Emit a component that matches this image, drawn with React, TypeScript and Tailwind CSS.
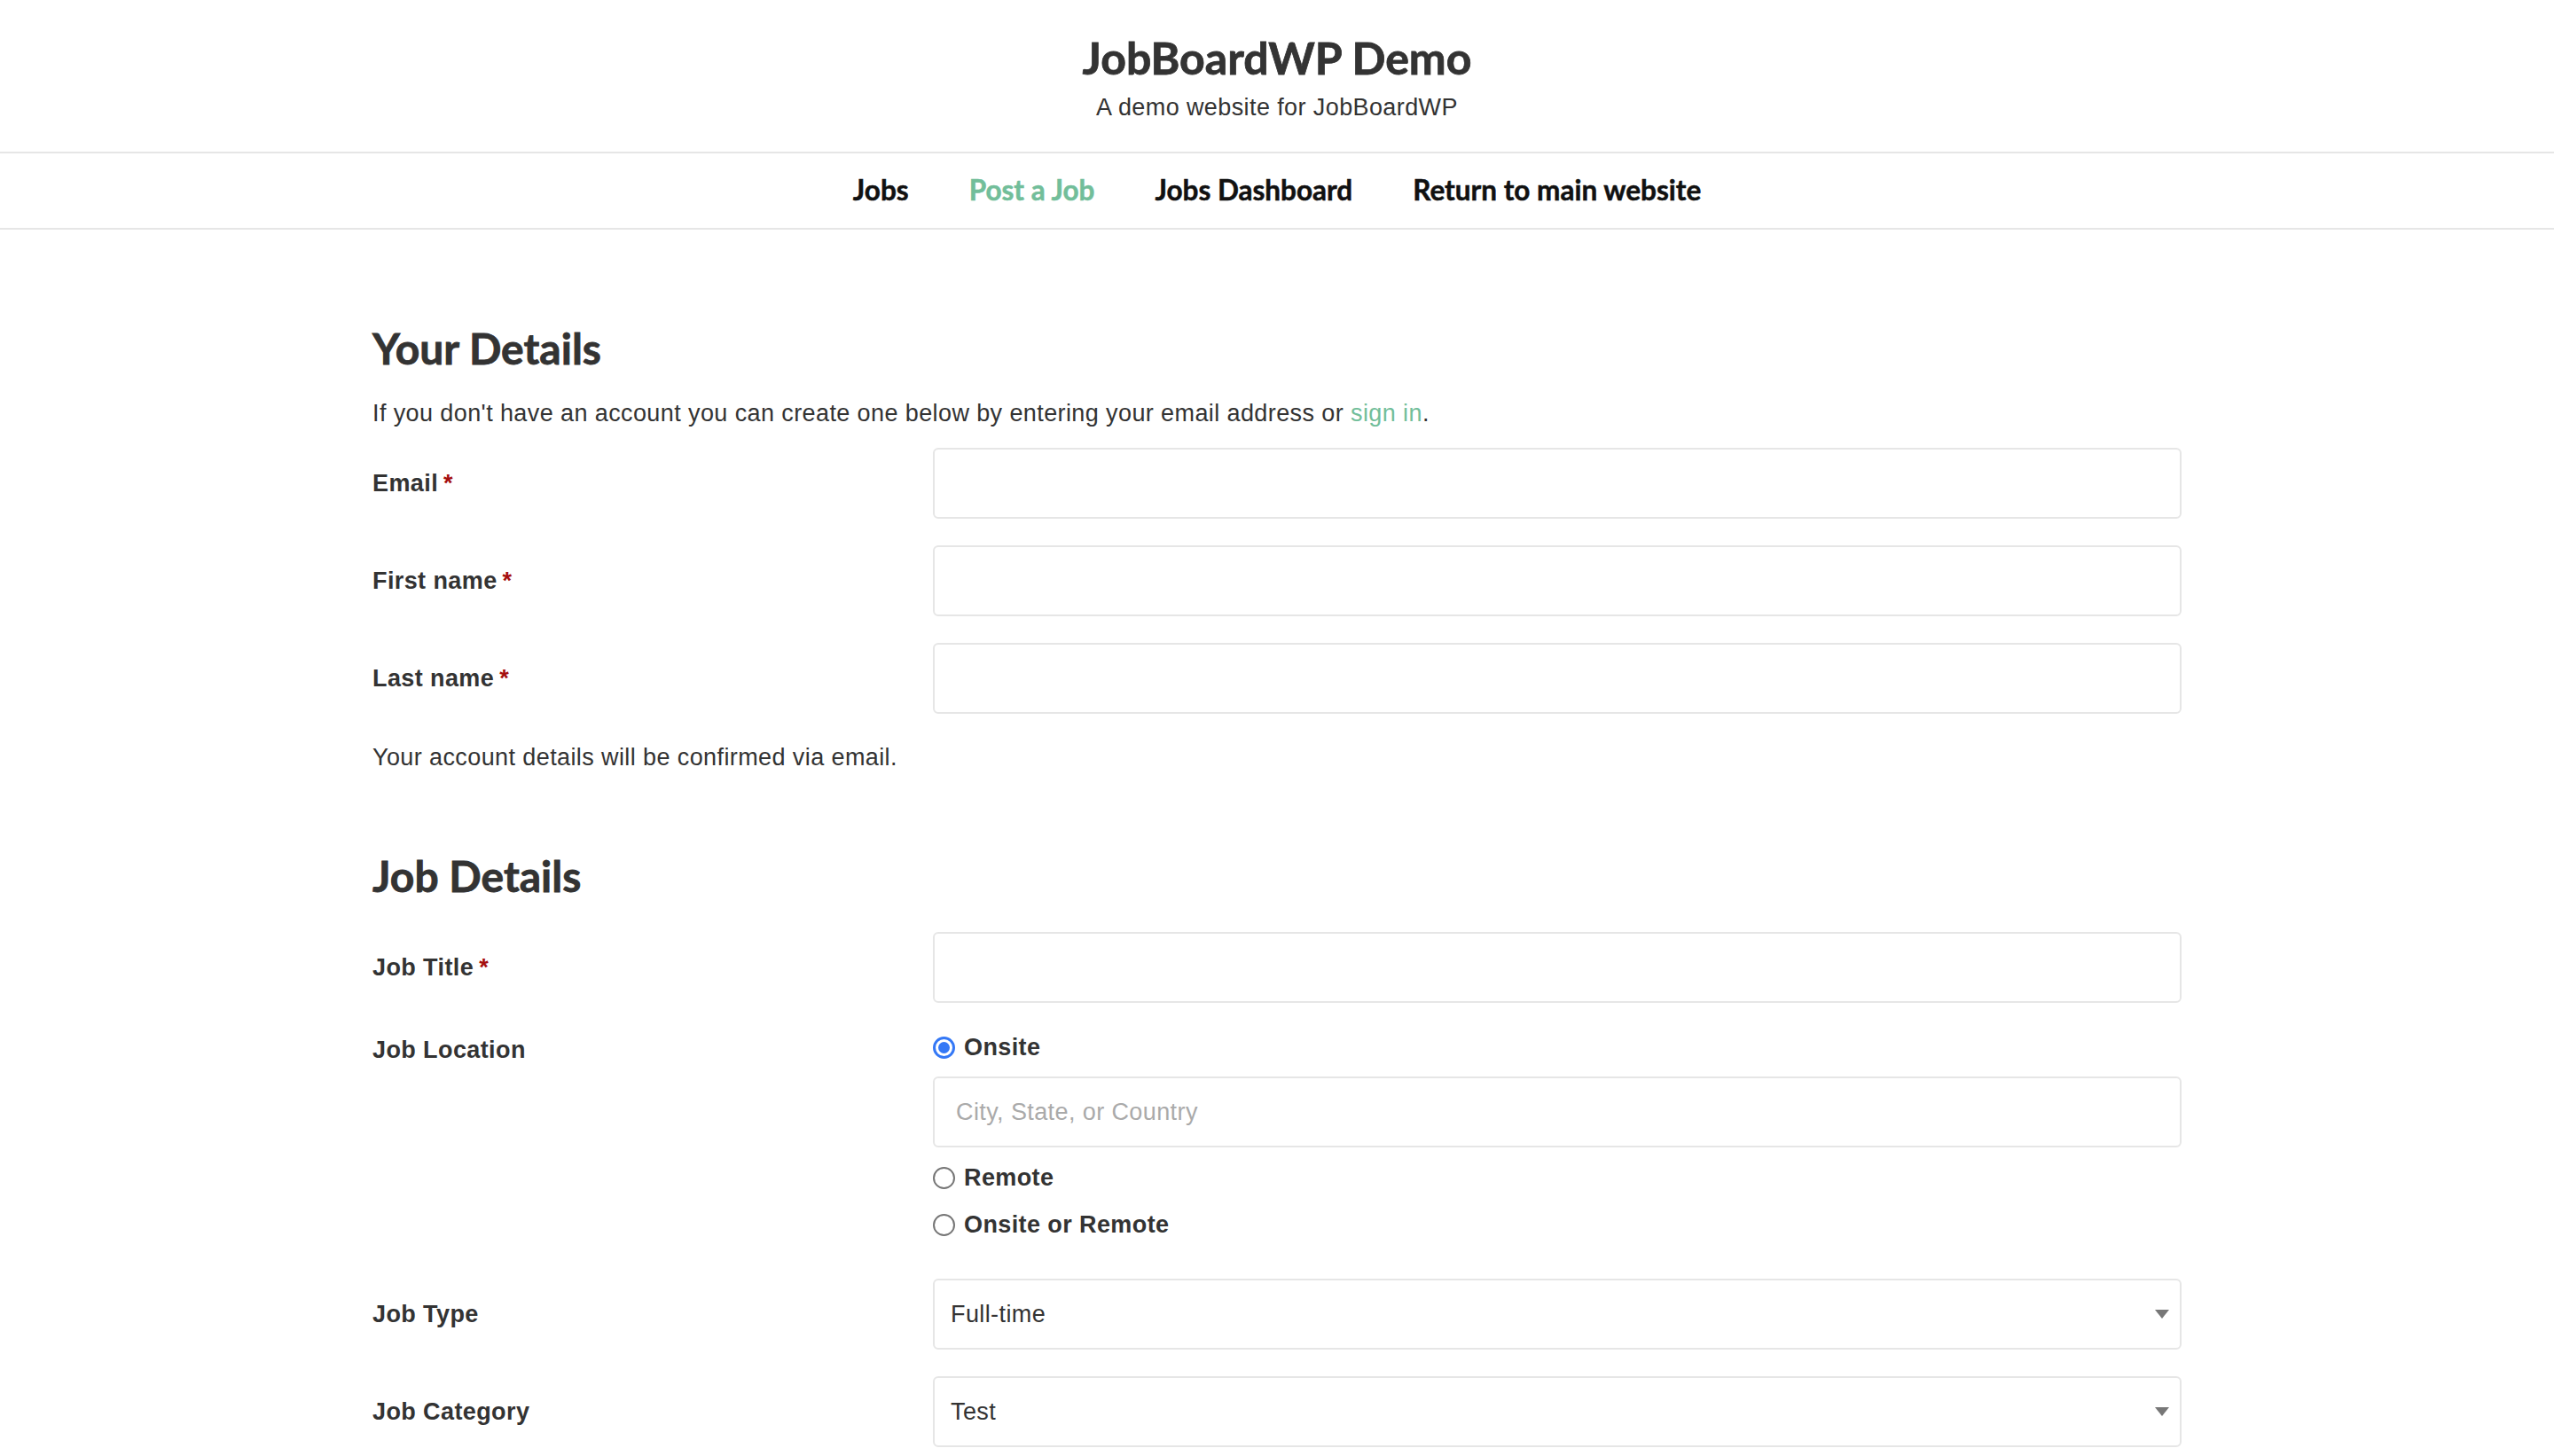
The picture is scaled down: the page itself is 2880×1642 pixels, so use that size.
import React from 'react';

const head = { fontFamily: "Lato, 'Open Sans', sans-serif" };
const body = { fontFamily: "'Liberation Sans', Arial, sans-serif" };

function Req() {
  return <span className="ml-[6px] text-[#a50e0e]">*</span>;
}

function Field({ label, required = true }: { label: string; required?: boolean }) {
  return (
    <div className="grid grid-cols-[632px_1408px] items-center">
      <label className="text-[27px] font-bold tracking-[0.4px] text-[#333]">
        {label}
        {required && <Req />}
      </label>
      <input className="h-[80px] w-full rounded-[6px] border-2 border-[#e6e6e6] bg-white px-[24px] text-[27px] outline-none" />
    </div>
  );
}

function Select({ label, value }: { label: string; value: string }) {
  return (
    <div className="grid grid-cols-[632px_1408px] items-center">
      <label className="text-[27px] font-bold tracking-[0.4px] text-[#333]">{label}</label>
      <div className="relative flex h-[80px] w-full items-center rounded-[6px] border-2 border-[#e6e6e6] bg-white pl-[18px] pr-[40px] text-[27px] tracking-[0.4px] text-[#333]">
        {value}
        <svg className="absolute right-[12px] top-1/2 -translate-y-1/2" width="16" height="10" viewBox="0 0 16 10">
          <path d="M0 0h16L8 10z" fill="#777" />
        </svg>
      </div>
    </div>
  );
}

function Radio({ checked = false, label }: { checked?: boolean; label: string }) {
  return (
    <div className="flex h-[40px] items-center">
      {checked ? (
        <span className="mr-[10px] flex h-[25px] w-[25px] items-center justify-center rounded-full border-[3px] border-[#3478f6] bg-white">
          <span className="h-[13px] w-[13px] rounded-full bg-[#3478f6]" />
        </span>
      ) : (
        <span className="mr-[10px] h-[25px] w-[25px] rounded-full border-2 border-[#767676] bg-white" />
      )}
      <span className="text-[27px] font-bold tracking-[0.4px] text-[#333]">{label}</span>
    </div>
  );
}

export default function App() {
  return (
    <div className="min-h-screen bg-white text-[#333]" style={body}>
      {/* Header */}
      <header className="flex flex-col items-center pt-[40px] pb-[32px]">
        <h1 className="text-[50px] font-bold leading-[50px] text-[#333] [-webkit-text-stroke:0.8px_#333]" style={head}>
          JobBoardWP Demo
        </h1>
        <p className="mt-[13px] text-[27px] leading-[36px] tracking-[0.4px] text-[#333]">A demo website for JobBoardWP</p>
      </header>

      {/* Nav */}
      <nav className="flex h-[88px] items-center justify-center gap-[68px] border-y-2 border-[#e6e6e6] text-[31.5px] font-bold text-[#111] [-webkit-text-stroke:0.5px_currentColor]" style={head}>
        <a>Jobs</a>
        <a className="text-[#72be9a]">Post a Job</a>
        <a>Jobs Dashboard</a>
        <a>Return to main website</a>
      </nav>

      <main className="mx-auto w-[2040px]">
        <h2 className="mt-[107px] text-[48px] font-bold leading-[54px] [-webkit-text-stroke:0.8px_#333]" style={head}>
          Your Details
        </h2>
        <p className="mt-[26px] text-[27px] leading-[40px] tracking-[0.4px]">
          If you don't have an account you can create one below by entering your email address or{' '}
          <a className="text-[#72be9a]">sign in</a>.
        </p>

        <div className="mt-[19px] flex flex-col gap-[30px]">
          <Field label="Email" />
          <Field label="First name" />
          <Field label="Last name" />
        </div>

        <p className="mt-[29px] text-[27px] leading-[40px] tracking-[0.4px]">Your account details will be confirmed via email.</p>

        <h2 className="mt-[87px] text-[48px] font-bold leading-[54px] [-webkit-text-stroke:0.8px_#333]" style={head}>
          Job Details
        </h2>

        <div className="mt-[36px] flex flex-col">
          <Field label="Job Title" />

          <div className="mt-[30px] grid grid-cols-[632px_1408px] items-start">
            <label className="flex h-[40px] items-center pt-[6px] text-[27px] font-bold tracking-[0.4px] text-[#333]">Job Location</label>
            <div className="flex flex-col">
              <Radio checked label="Onsite" />
              <input
                placeholder="City, State, or Country"
                className="mt-[13px] h-[80px] w-full rounded-[6px] border-2 border-[#e6e6e6] bg-white px-[24px] text-[27px] tracking-[0.4px] text-[#333] outline-none placeholder:text-[#aaa]"
              />
              <div className="mt-[14px] flex flex-col gap-[13px]">
                <Radio label="Remote" />
                <Radio label="Onsite or Remote" />
              </div>
            </div>
          </div>

          <div className="mt-[41px] flex flex-col gap-[30px]">
            <Select label="Job Type" value="Full-time" />
            <Select label="Job Category" value="Test" />
          </div>
        </div>
        <div className="h-[120px]" />
      </main>
    </div>
  );
}
